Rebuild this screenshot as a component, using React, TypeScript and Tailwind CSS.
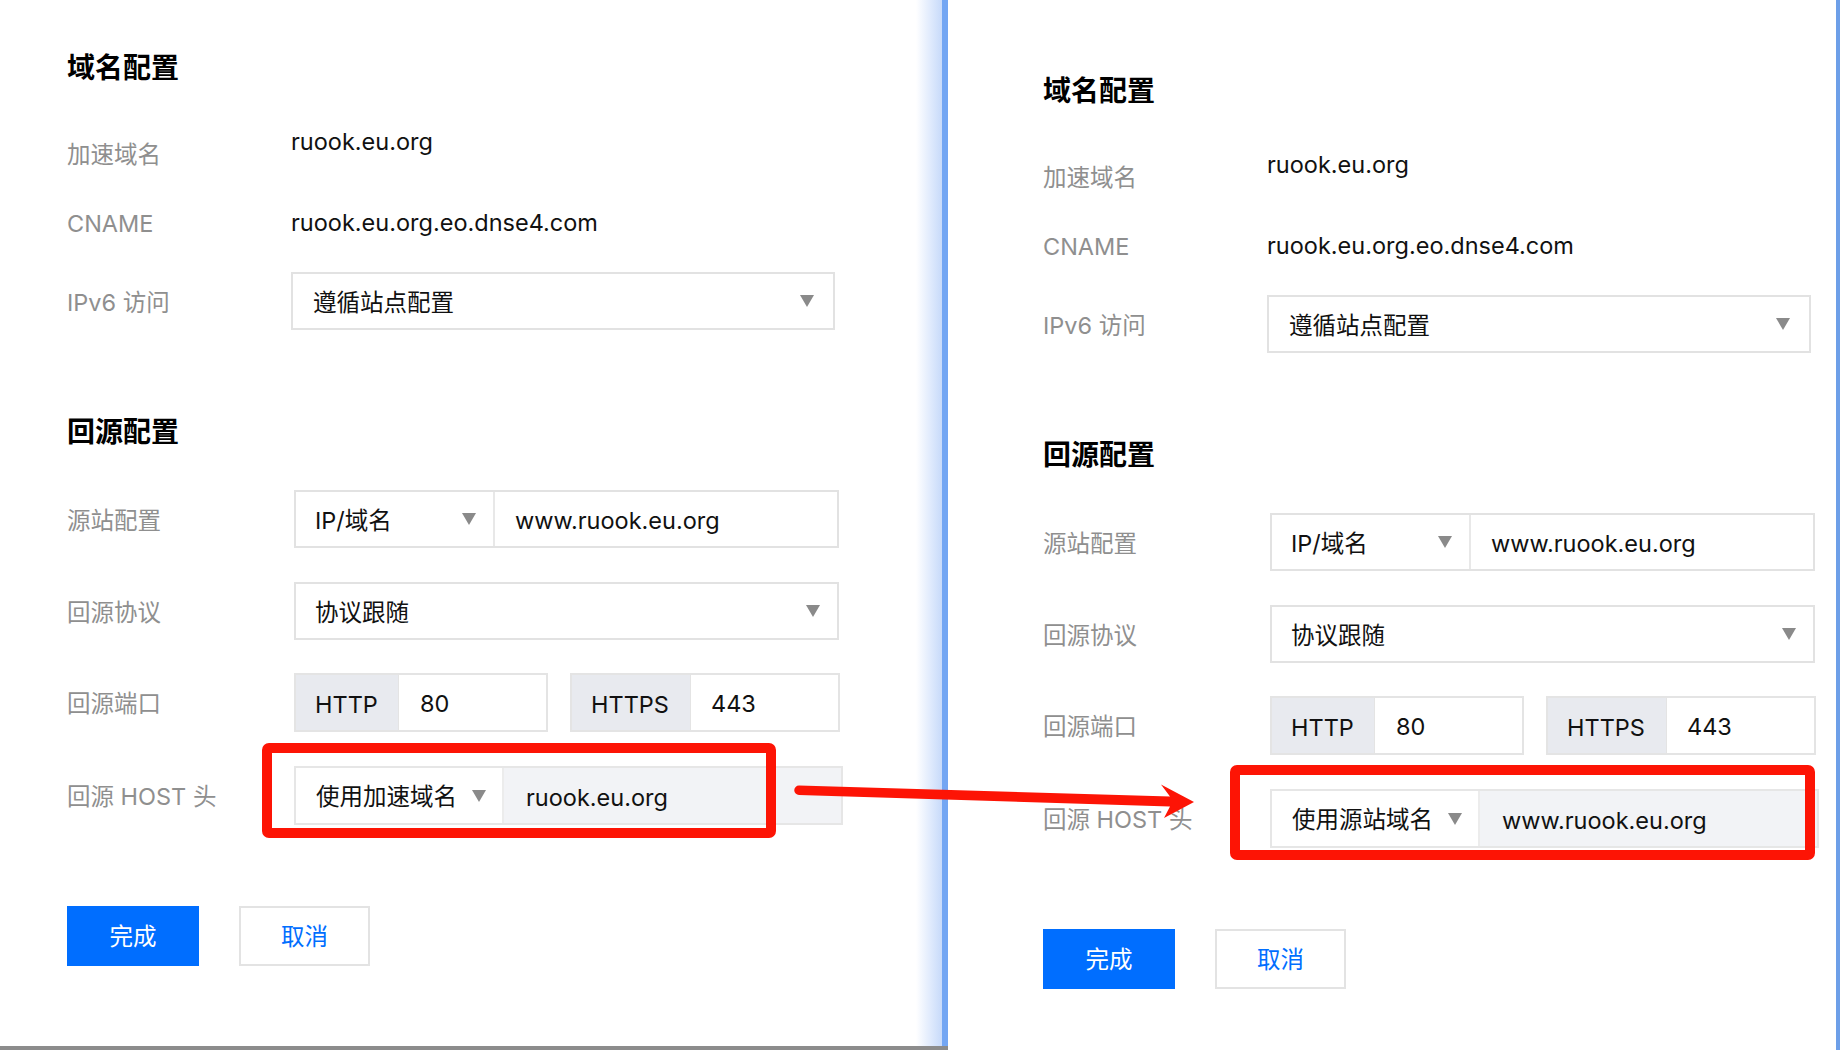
import React from "react";

type FormProps = {
  hostMode: string;
  hostValue: string;
};

function Caret() {
  return (
    <svg width="14" height="12" viewBox="0 0 14 12" className="shrink-0">
      <path d="M0 0 L14 0 L7 12 Z" fill="#8a8a8a" />
    </svg>
  );
}

function Label({ children, className = "" }: { children: React.ReactNode; className?: string }) {
  return <div className={`w-[224px] shrink-0 text-[#8f8f8f] ${className}`}>{children}</div>;
}

function ConfigForm({ hostMode, hostValue }: FormProps) {
  return (
    <div className="flex flex-col">
      {/* domain section */}
      <h2 className="h-[36px] pt-[1px] text-[28px] font-bold leading-[36px] text-black">域名配置</h2>

      <div className="mt-[35px] flex h-[58px] items-start">
        <Label className="pt-[19px]">加速域名</Label>
        <div className="pt-[6px] text-[#111]">ruook.eu.org</div>
      </div>

      <div className="mt-[15px] flex h-[58px] items-center">
        <Label className="pt-[3px]">CNAME</Label>
        <div className="pt-[1px] text-[#111]">ruook.eu.org.eo.dnse4.com</div>
      </div>

      <div className="mt-[21px] flex h-[58px] items-center">
        <Label className="pt-[3px]">IPv6 访问</Label>
        <div className="flex h-[58px] w-[544px] items-center justify-between border-2 border-[#e2e2e2] bg-white pl-[20px] pr-[19px] text-[#111]">
          <span className="pt-[3px]">遵循站点配置</span>
          <Caret />
        </div>
      </div>

      {/* origin section */}
      <h2 className="mt-[83px] h-[36px] pt-[1px] text-[28px] font-bold leading-[36px] text-black">回源配置</h2>

      <div className="mt-[41px] flex h-[58px] items-center">
        <Label className="pt-[3px]">源站配置</Label>
        <div className="ml-[3px] flex h-[58px] w-[545px] border-2 border-[#e2e2e2] text-[#111]">
          <div className="flex w-[199px] shrink-0 items-center justify-between border-r-2 border-[#e8e8e8] pl-[19px] pr-[17px]">
            <span className="pt-[3px]">IP/域名</span>
            <Caret />
          </div>
          <div className="flex flex-1 items-center pl-[20px] pt-[3px]">www.ruook.eu.org</div>
        </div>
      </div>

      <div className="mt-[34px] flex h-[58px] items-center">
        <Label className="pt-[3px]">回源协议</Label>
        <div className="ml-[3px] flex h-[58px] w-[545px] items-center justify-between border-2 border-[#e2e2e2] pl-[19px] pr-[17px] text-[#111]">
          <span className="pt-[3px]">协议跟随</span>
          <Caret />
        </div>
      </div>

      <div className="mt-[33px] flex h-[59px] items-center">
        <Label className="pt-[3px]">回源端口</Label>
        <div className="ml-[3px] flex h-[59px] w-[254px] border-2 border-[#e4e4e4] text-[#111]">
          <div className="flex w-[103px] shrink-0 items-center border-r border-[#e4e4e4] bg-[#e8eaef] pl-[19px] pt-[5px]">HTTP</div>
          <div className="flex flex-1 items-center pl-[21px] pt-[2px]">80</div>
        </div>
        <div className="ml-[22px] flex h-[59px] w-[270px] border-2 border-[#e4e4e4] text-[#111]">
          <div className="flex w-[119px] shrink-0 items-center border-r border-[#e4e4e4] bg-[#e8eaef] pl-[19px] pt-[5px]">HTTPS</div>
          <div className="flex flex-1 items-center pl-[20px] pt-[2px]">443</div>
        </div>
      </div>

      <div className="mt-[34px] flex h-[59px] items-center">
        <Label className="pt-[3px]">回源 HOST 头</Label>
        <div className="ml-[3px] flex h-[59px] w-[549px] border-2 border-[#e6e6e6] text-[#111]">
          <div className="flex w-[208px] shrink-0 items-center justify-between border-r-2 border-[#ececec] bg-white pl-[20px] pr-[16px]">
            <span className="pt-[3px]">{hostMode}</span>
            <Caret />
          </div>
          <div className="flex flex-1 items-center bg-[#f2f3f6] pl-[22px] pt-[4px]">{hostValue}</div>
        </div>
      </div>

      {/* actions */}
      <div className="mt-[81px] flex h-[60px] items-center gap-[40px]">
        <button className="h-[60px] w-[132px] bg-[#006eff] pt-[2px] text-white">完成</button>
        <button className="h-[60px] w-[131px] border-2 border-[#e3e3e3] bg-white pt-[2px] text-[#006eff]">取消</button>
      </div>
    </div>
  );
}

export default function App() {
  return (
    <div className="relative flex h-[1050px] w-[1840px] overflow-hidden bg-white font-['Inter','Noto_Sans_CJK_SC',sans-serif] text-[23.5px] leading-[32px]">
      {/* left window */}
      <div className="relative flex h-full w-[948px] shrink-0 border-b-4 border-[#8c8c8c]">
        <div className="flex-1 pl-[67px] pt-[49px]">
          <ConfigForm hostMode="使用加速域名" hostValue="ruook.eu.org" />
        </div>
        <div className="h-full w-[26px] bg-gradient-to-r from-white to-[#c7dafa]" />
        <div className="h-full w-[6px] bg-[#73a6f3]" />
      </div>

      {/* right window */}
      <div className="flex h-full flex-1 border-r-4 border-[#6d9fe8]">
        <div className="flex-1 pl-[95px] pt-[72px]">
          <ConfigForm hostMode="使用源站域名" hostValue="www.ruook.eu.org" />
        </div>
      </div>

      {/* highlight frames */}
      <div className="pointer-events-none absolute left-[262px] top-[743px] h-[95px] w-[514px] rounded-[7px] border-[10px] border-[#fd1405]" />
      <div className="pointer-events-none absolute left-[1230px] top-[765px] h-[95px] w-[585px] rounded-[7px] border-[10px] border-[#fd1405]" />

      {/* connecting arrow */}
      <svg className="pointer-events-none absolute left-0 top-0" width="1840" height="1050" viewBox="0 0 1840 1050">
        <path
          d="M 799 785.5 L 1170 796.5 L 1161 784.5 L 1194 802 L 1164 818 L 1170 806.5 L 799 795 A 4.75 4.75 0 0 1 799 785.5 Z"
          fill="#fd1405"
        />
      </svg>
    </div>
  );
}
